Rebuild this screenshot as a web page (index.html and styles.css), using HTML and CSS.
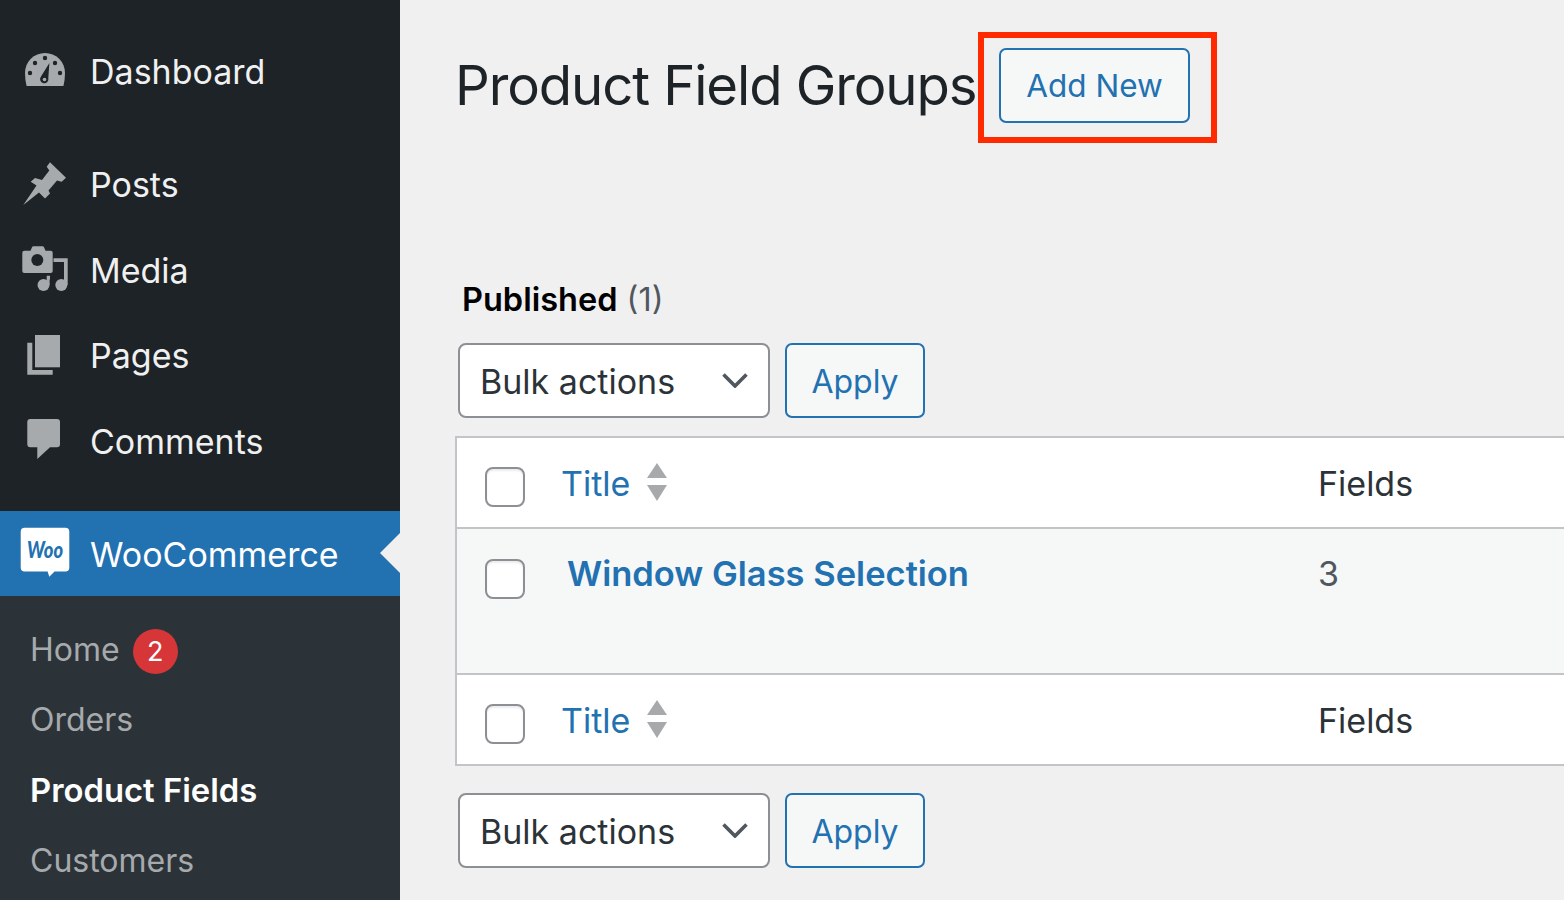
FILE: index.html
```html
<!DOCTYPE html>
<html lang="en">
<head>
<meta charset="utf-8">
<title>Product Field Groups</title>
<link rel="stylesheet" href="styles.css">
</head>
<body>
<div class="app">
  <nav class="sidebar">
    <ul class="menu">
      <li class="item">
        <svg class="icon" viewBox="0 0 48 48">
          <path class="fg" d="M5.6 38Q4 32 4 25A20 20 0 0 1 44 25Q44 32 42.4 38Z"/>
          <g class="bg">
            <circle cx="9" cy="25" r="2.2"/><circle cx="14" cy="15" r="2.2"/><circle cx="24" cy="10" r="2.2"/><circle cx="34" cy="15" r="2.2"/><circle cx="39" cy="25" r="2.2"/>
            <path d="M28.4 15 L27.3 30 A4.2 4.2 0 1 1 20 28.5Z"/>
          </g>
          <circle class="fg" cx="23.5" cy="31.5" r="1.8"/>
        </svg>
        <span>Dashboard</span>
      </li>
      <li class="sep"></li>
      <li class="item">
        <svg class="icon" viewBox="0 0 48 48">
          <path class="fg" d="M2.3 44 15.5 24.5 9.7 20.7 14 17 21 19 28.3 9.5 25.7 5.7 29 1.3 45 16.7 40.7 20.7 36 19.5 27.5 29.5 29 32.5 24 37.5 18 31.5Z"/>
        </svg>
        <span>Posts</span>
      </li>
      <li class="item">
        <svg class="icon" viewBox="0 0 48 48">
          <path class="fg" d="M3.3 4.7H9.5L11 1.2Q11.4.2 12.5.2H21.5Q22.6.2 23 1.2L24.5 4.7H29.7Q31.7 4.7 31.7 6.7V25Q31.7 27 29.7 27H3.3Q1.3 27 1.3 25V6.7Q1.3 4.7 3.3 4.7Z"/>
          <circle class="bg" cx="16.3" cy="14" r="6"/>
          <path class="fg" d="M32.5 12.3H46.7V39H43V16H32.5Z"/>
          <circle class="fg" cx="40.3" cy="39" r="6"/>
          <circle class="fg" cx="22.5" cy="39" r="6"/>
          <path class="fg" d="M25.7 39V29.7H29V33.5H28.6V39Z"/>
        </svg>
        <span>Media</span>
      </li>
      <li class="item">
        <svg class="icon" viewBox="0 0 48 48">
          <path class="fg" d="M14 3H39V35.3H14Z"/>
          <path class="fg" d="M6.3 10.7H11.3V38H31.7V42.7H6.3Z"/>
        </svg>
        <span>Pages</span>
      </li>
      <li class="item">
        <svg class="icon" viewBox="0 0 48 48">
          <path class="fg" d="M9.3 2H36Q39 2 39 5V27.3Q39 30.3 36 30.3H29L16.3 42V30.3H9.3Q6.3 30.3 6.3 27.3V5Q6.3 2 9.3 2Z"/>
        </svg>
        <span>Comments</span>
      </li>
      <li class="sep last"></li>
      <li class="item current">
        <svg class="icon" viewBox="0 0 48 48">
          <path class="white" d="M3.7-1.25H44.3Q48.3-1.25 48.3 2.75V38.45Q48.3 42.45 44.3 42.45H33.5L28.3 47.75 26.6 42.45H3.7Q-.3 42.45-.3 38.45V2.75Q-.3-1.25 3.7-1.25Z"/>
          <text class="woo" x="6" y="29" textLength="36" lengthAdjust="spacingAndGlyphs">Woo</text>
        </svg>
        <span class="woo-label">WooCommerce</span>
        <i class="notch"></i>
      </li>
    </ul>
    <ul class="submenu">
      <li>Home <span class="badge">2</span></li>
      <li>Orders</li>
      <li class="on">Product Fields</li>
      <li>Customers</li>
    </ul>
  </nav>

  <main class="main">
    <header class="head">
      <h1>Product Field Groups</h1>
      <div class="callout"><a class="btn add">Add New</a></div>
    </header>

    <p class="status"><b>Published</b> <span>(1)</span></p>

    <div class="tablenav">
      <div class="select">Bulk actions
        <svg class="chev" viewBox="0 0 26 15"><path d="M1.5 1.5 13 13 24.5 1.5"/></svg>
      </div>
      <a class="btn apply">Apply</a>
    </div>

    <div class="table">
      <div class="row head-row">
        <div class="cb"><input type="checkbox"></div>
        <div class="title"><a>Title</a>
          <svg class="sort" viewBox="0 0 22 38"><path d="M11 0 21 15H1Z"/><path d="M1 22H21L11 38Z"/></svg>
        </div>
        <div class="col">Fields</div>
      </div>
      <div class="row body-row">
        <div class="cb"><input type="checkbox"></div>
        <div class="title"><a class="strong">Window Glass Selection</a></div>
        <div class="col num">3</div>
      </div>
      <div class="row foot-row">
        <div class="cb"><input type="checkbox"></div>
        <div class="title"><a>Title</a>
          <svg class="sort" viewBox="0 0 22 38"><path d="M11 0 21 15H1Z"/><path d="M1 22H21L11 38Z"/></svg>
        </div>
        <div class="col">Fields</div>
      </div>
    </div>

    <div class="tablenav bottom">
      <div class="select">Bulk actions
        <svg class="chev" viewBox="0 0 26 15"><path d="M1.5 1.5 13 13 24.5 1.5"/></svg>
      </div>
      <a class="btn apply">Apply</a>
    </div>
  </main>
</div>
</body>
</html>
```
FILE: styles.css
```css
* { box-sizing: border-box; }
html, body { margin: 0; height: 900px; overflow: hidden; }
body { font-family: Inter, "Liberation Sans", sans-serif; background: #f0f0f1; color: #2c3338; }
ul { list-style: none; margin: 0; padding: 0; }

.app { display: flex; height: 900px; overflow: hidden; }

.sidebar { flex: 0 0 400px; height: 900px; background: #1d2327; padding-top: 29px; display: flex; flex-direction: column; }
.menu { display: flex; flex-direction: column; }
.item { position: relative; height: 85.5px; display: flex; align-items: center; padding-left: 21px; gap: 21px; color: #f0f0f1; font-size: 34px; }
.sep { height: 27.5px; }
.sep.last { height: 26.5px; }
.icon { width: 48px; height: 48px; overflow: visible; flex: none; }
.fg { fill: #a7aaad; }
.bg { fill: #1d2327; }
.white { fill: #fff; }
.woo { font-family: Lato, sans-serif; font-style: italic; font-weight: 900; font-size: 22px; fill: #2271b1; }
.woo-label { padding-top: 2px; }
.current { background: #2271b1; color: #fff; }
.notch { position: absolute; right: 0; top: 22px; border: 20px solid transparent; border-left-width: 0; border-right-color: #f0f0f1; }

.submenu { flex: 1; background: #2c3338; padding-top: 18.5px; color: #a7aaad; font-size: 32px; }
.submenu li { height: 70.3px; padding-left: 30px; display: flex; align-items: center; gap: 13px; }
.submenu .on { color: #fff; font-weight: 600; font-size: 32.8px; }
.badge { width: 45px; height: 45px; margin-top: 4px; border-radius: 50%; background: #d63638; color: #fff; font-size: 27px; display: flex; align-items: center; justify-content: center; }

.main { flex: 1; min-width: 0; padding-left: 55px; padding-top: 32px; }
.head { display: flex; align-items: flex-start; }
h1 { margin: 23px 0 0; font-size: 54.5px; letter-spacing: -1.1px; line-height: 60px; font-weight: 400; color: #1d2327; width: 523px; white-space: nowrap; }
.callout { border: 6px solid #ff2a00; padding: 10px 21px 14px 15px; }
.btn { display: flex; align-items: center; justify-content: center; border: 2px solid #2271b1; border-radius: 7px; background: #f6f7f7; color: #2271b1; font-size: 32px; }
.add { width: 191px; height: 75px; font-size: 31.5px; }

.status { margin: 137px 0 0 7px; font-size: 32.5px; line-height: 40px; color: #50575e; }
.status b { color: #000; font-weight: 600; }

.tablenav { display: flex; gap: 15px; margin: 23px 0 0 3px; }
.tablenav.bottom { margin-top: 27px; }
.select { width: 312px; height: 75px; display: flex; align-items: center; justify-content: space-between; padding: 2px 20px 0; background: #fff; border: 2px solid #8c8f94; border-radius: 8px; font-size: 34px; color: #2c3338; }
.chev { width: 26px; height: 15px; margin-top: -2px; fill: none; stroke: #50575e; stroke-width: 3.6; }
.apply { width: 140px; height: 75px; padding-top: 2px; }

.table { width: 1200px; margin-top: 18px; border: 2px solid #c3c4c7; border-right: 0; background: #fff; }
.row { display: grid; grid-template-columns: 104px 757px 1fr; font-size: 34px; line-height: 40px; }
.head-row { height: 91px; padding-top: 26px; border-bottom: 2px solid #c3c4c7; }
.body-row { height: 146px; padding-top: 25px; border-bottom: 2px solid #c3c4c7; background: #f6f7f7; }
.foot-row { height: 89px; padding-top: 26px; }
.cb { padding-left: 28px; }
.cb input { appearance: none; display: block; width: 40px; height: 40px; margin: 3px 0 0; background: #fff; border: 2px solid #8c8f94; border-radius: 8px; box-shadow: inset 0 2px 2px rgba(0,0,0,.08); }
.body-row .cb input { margin-top: 5px; }
.title { display: flex; align-items: flex-start; gap: 16px; color: #2271b1; }
.title a { color: #2271b1; }
.strong { font-weight: 600; font-size: 34.5px; margin-left: 6px; }
.sort { width: 22px; height: 38px; margin-top: -1px; fill: #a7aaad; flex: none; }
.col { color: #2c3338; }
.num { color: #50575e; }
```
